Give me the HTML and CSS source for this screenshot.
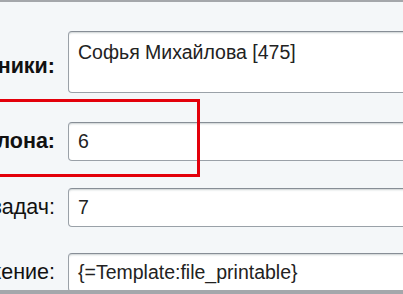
FILE: index.html
```html
<!DOCTYPE html>
<html lang="ru">
<head>
    <meta charset="UTF-8">
    <meta name="viewport" content="width=device-width, initial-scale=1.0">
    <title>Параметры шаблона</title>
    <link rel="stylesheet" href="styles.css">
</head>
<body>
    <main class="form">
        <div class="row row-1">
            <div class="label bold"><span>Участники:</span></div>
            <div class="field">
                <div class="input textarea">Софья Михайлова [475]</div>
            </div>
        </div>
        <div class="row row-2">
            <div class="label bold"><span>Номер шаблона:</span></div>
            <div class="field">
                <div class="input">6</div>
            </div>
        </div>
        <div class="row row-3">
            <div class="label"><span>Количество задач:</span></div>
            <div class="field">
                <div class="input">7</div>
            </div>
        </div>
        <div class="row">
            <div class="label"><span>Выражение:</span></div>
            <div class="field">
                <div class="input">{=Template:file_printable}</div>
            </div>
        </div>
    </main>
    <!-- red annotation frame -->
    <div class="mark"></div>
</body>
</html>
```

FILE: styles.css
```css
html, body {
    margin: 0;
    padding: 0;
}
body {
    width: 403px;
    height: 294px;
    overflow: hidden;
    position: relative;
    box-sizing: border-box;
    background-color: #f4f7f9;
    border-top: 2px solid #a4a7ab;
    border-bottom: 4px solid #a4a7ab;
    font-family: "Liberation Sans", Arial, sans-serif;
    font-size: 19.5px;
    color: #222;
}
.form {
    display: flex;
    flex-direction: column;
    gap: 26px;
    padding-top: 29px;
}
.row {
    display: flex;
    align-items: center;
    gap: 13px;
}
.row-1 .label {
    margin-top: 8px;
}
.row-2 {
    margin-top: 3px;
}
.row-3 {
    margin-top: 1px;
}
.label {
    flex: 0 0 55px;
    min-width: 0;
    display: flex;
    justify-content: flex-end;
    white-space: nowrap;
    font-size: 21.5px;
    color: #111;
}
.label span {
    flex: none;
}
.bold {
    font-weight: bold;
}
.field {
    flex: 0 0 auto;
}
.input {
    box-sizing: border-box;
    width: 420px;
    height: 39px;
    padding: 0 9px;
    display: flex;
    align-items: center;
    background: #fff;
    border: 1px solid #9aa1a8;
    border-top-color: #878e96;
    border-radius: 4px;
    box-shadow: inset 0 2px 2px -1px rgba(180, 188, 191, 0.7);
    white-space: nowrap;
}
.textarea {
    height: 62px;
    align-items: flex-start;
    padding-top: 9px;
}
.mark {
    position: absolute;
    left: -4px;
    top: 97px;
    width: 198px;
    height: 72px;
    border: 3px solid #e3000b;
}
```
